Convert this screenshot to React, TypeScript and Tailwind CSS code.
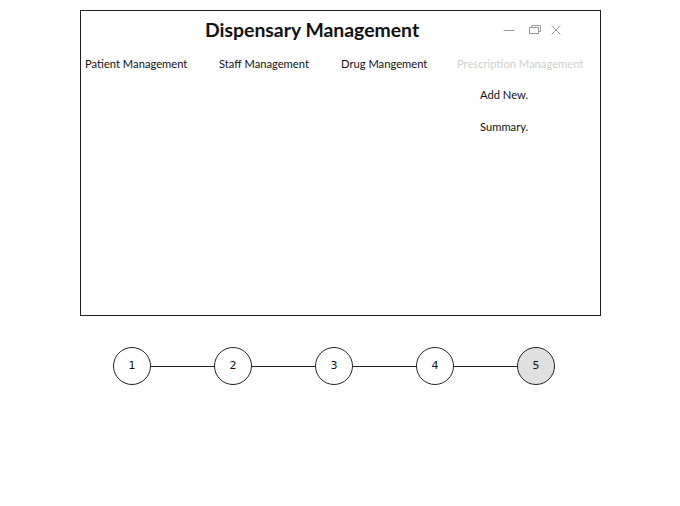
import React from 'react';

const steps = ['1', '2', '3', '4', '5'];

const WindowControls: React.FC = () => (
    <div className="flex items-center gap-[8px]">
        <svg width="14" height="14" viewBox="0 0 14 14" className="mr-[3px]">
            <path d="M1.5 7.5h11" stroke="#999" strokeWidth="1" />
        </svg>
        <svg width="14" height="14" viewBox="0 0 14 14">
            <rect x="2.5" y="4.5" width="9" height="6" fill="none" stroke="#999" />
            <path d="M4.5 4.5v-2h9v6h-2" fill="none" stroke="#999" />
        </svg>
        <svg width="14" height="14" viewBox="0 0 14 14">
            <path d="M2.5 2.5l9 9M11.5 2.5l-9 9" stroke="#999" strokeWidth="1" />
        </svg>
    </div>
);

const App: React.FC = () => {
    return (
        <div className="w-[680px] h-[506px] bg-white font-['Lato','Noto_Sans',sans-serif] text-[#111]">
            <div className="pt-[10px] pl-[80px]">
                <div className="w-[521px] h-[306px] border border-[#222] flex flex-col">
                    <div className="flex items-center h-[38px] pl-[124px] pr-[37px]">
                        <h1 className="text-[19.4px] font-bold">Dispensary Management</h1>
                        <div className="ml-auto">
                            <WindowControls />
                        </div>
                    </div>
                    <div className="grid grid-cols-[134px_122px_116px_1fr] pl-[4px] mt-[8px] text-[11.2px] leading-[14px]">
                        <span>Patient Management</span>
                        <span>Staff Management</span>
                        <span>Drug Mangement</span>
                        <div className="flex flex-col">
                            <span className="text-[#cfcfcf]">Prescription Management</span>
                            <div className="flex flex-col pl-[23px] pt-[17px] gap-[18px]">
                                <span>Add New.</span>
                                <span>Summary.</span>
                            </div>
                        </div>
                    </div>
                </div>
            </div>
            <div className="flex items-center pl-[113px] mt-[31px]">
                {steps.map((s, i) => (
                    <React.Fragment key={s}>
                        {i > 0 && <div className="w-[63px] h-px bg-[#222]" />}
                        <div
                            className={`w-[38px] h-[38px] rounded-full border border-[#222] flex items-center justify-center text-[11px] font-['DejaVu_Sans',sans-serif] ${
                                i === 4 ? 'bg-[#e0e0e0]' : 'bg-white'
                            }`}
                        >
                            {s}
                        </div>
                    </React.Fragment>
                ))}
            </div>
        </div>
    );
};

export default App;
